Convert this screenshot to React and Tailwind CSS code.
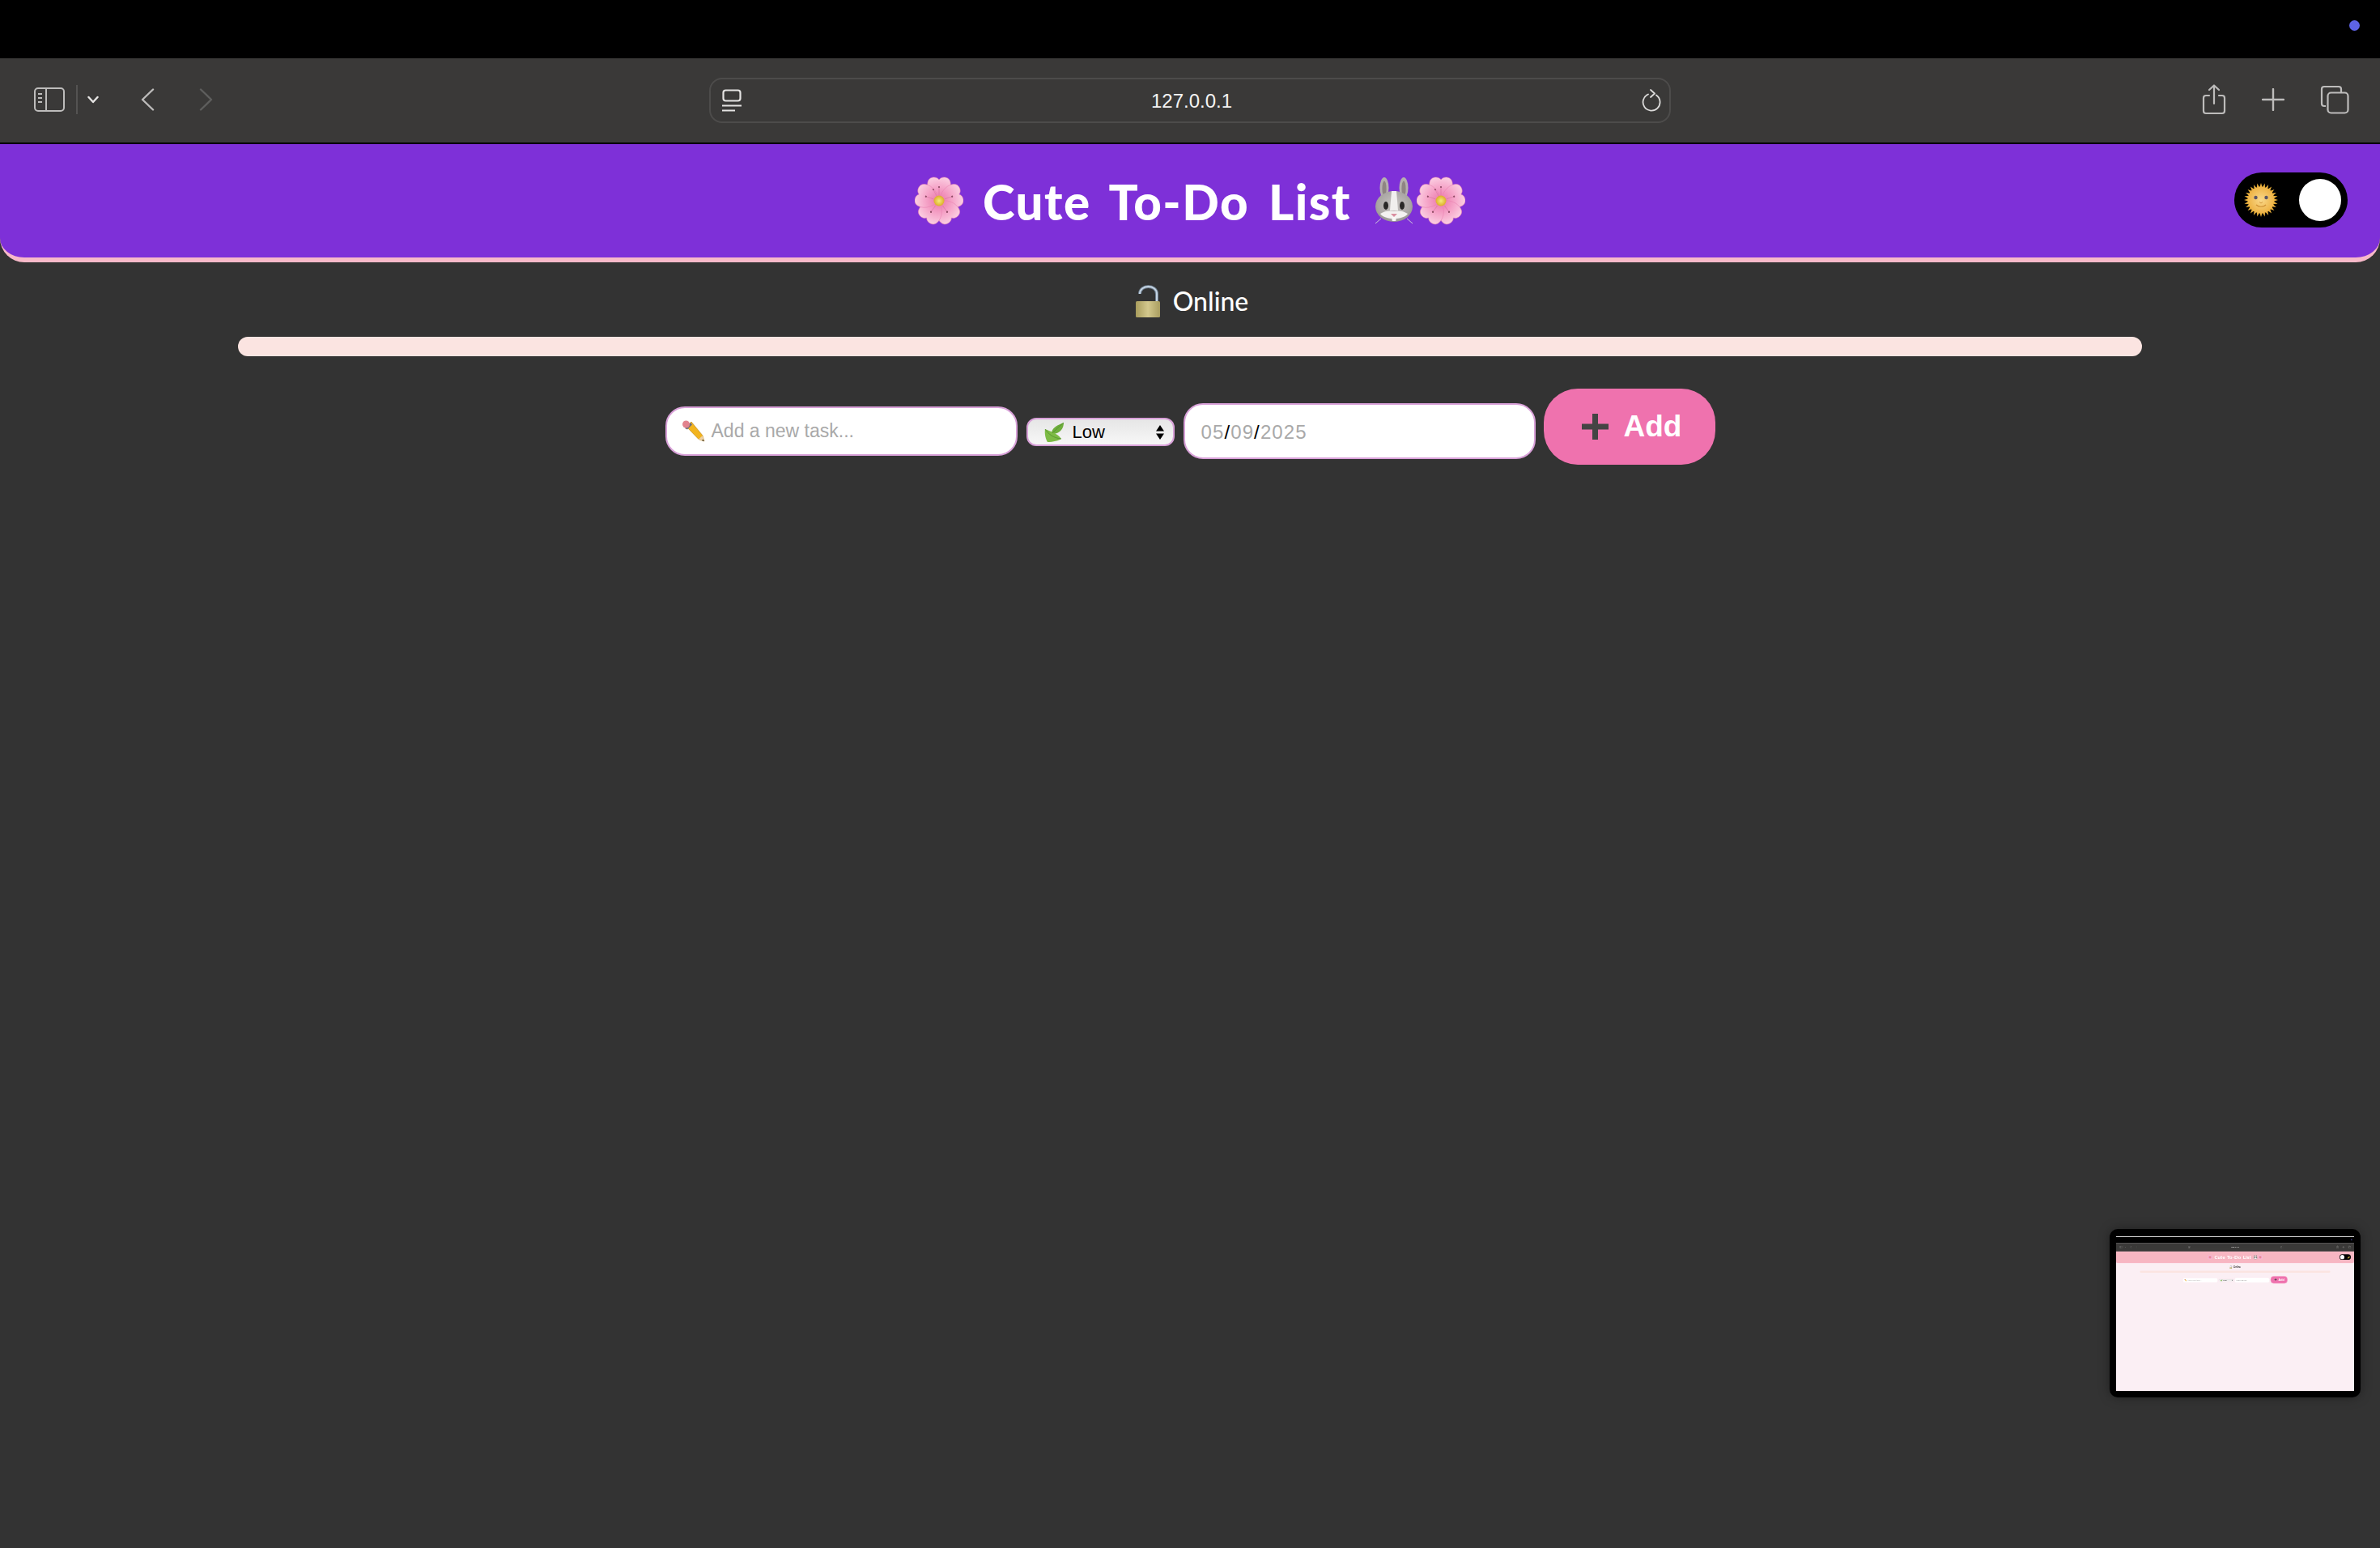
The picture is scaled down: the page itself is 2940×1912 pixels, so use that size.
import React from 'react';

const comic = "font-['Comic_Sans_MS','Lato',sans-serif]";
const arial = "font-['Liberation_Sans',Arial,sans-serif]";

const Flower = ({ className }) => (
  <svg viewBox="0 0 60 60" className={className}>
    <defs>
      <radialGradient id="petal" gradientUnits="userSpaceOnUse" cx="30" cy="30" r="30">
        <stop offset="0.2" stopColor="#ee86b4" />
        <stop offset="0.6" stopColor="#f6a9cb" />
        <stop offset="1" stopColor="#fbcfe2" />
      </radialGradient>
      <radialGradient id="pollen">
        <stop offset="0" stopColor="#f6ea7a" />
        <stop offset="1" stopColor="#dcae2a" />
      </radialGradient>
    </defs>
    {[0, 72, 144, 216, 288].map((a) => (
      <g key={a} transform={`rotate(${a} 30 30)`}>
        <path d="M30 30C22 26 14 17 16 7C17 0 27 -1 30 4C33 -1 43 0 44 7C46 17 38 26 30 30Z" fill="url(#petal)" stroke="#e77fae" strokeWidth="0.5" />
        <line x1="30" y1="23" x2="30" y2="13" stroke="#d8739f" strokeWidth="0.6" />
        <circle cx="30" cy="13" r="1.1" fill="#8d4a63" />
        <line x1="30" y1="30" x2="41" y2="19" stroke="#d8739f" strokeWidth="0.5" />
        <circle cx="41" cy="19" r="1" fill="#8d4a63" />
      </g>
    ))}
    <circle cx="30" cy="30" r="6.5" fill="url(#pollen)" />
  </svg>
);

const Bunny = () => (
  <svg viewBox="0 0 50 60" className="w-[50px] h-[60px]">
    <defs>
      <radialGradient id="fur" cx="0.5" cy="0.45" r="0.6">
        <stop offset="0" stopColor="#c9c5c3" />
        <stop offset="0.75" stopColor="#a9a5a3" />
        <stop offset="1" stopColor="#8f8b89" />
      </radialGradient>
    </defs>
    <ellipse cx="13" cy="14" rx="5.5" ry="13" fill="#b5b0ae" />
    <ellipse cx="37" cy="14" rx="5.5" ry="13" fill="#b5b0ae" />
    <ellipse cx="13" cy="15" rx="2.6" ry="9.5" fill="#8f8583" />
    <ellipse cx="37" cy="15" rx="2.6" ry="9.5" fill="#8f8583" />
    <ellipse cx="25" cy="37" rx="23" ry="19" fill="url(#fur)" />
    <path d="M22 18h6l2 24H20z" fill="#f1efee" />
    <path d="M8 46C14 42 20 42 25 43C30 42 36 42 42 46C36 54 14 54 8 46Z" fill="#f4f2f1" />
    <ellipse cx="15" cy="36" rx="3" ry="5" fill="#2a2827" />
    <ellipse cx="35" cy="36" rx="3" ry="5" fill="#2a2827" />
    <path d="M21 46h8l-4 4z" fill="#d98ea0" />
    <rect x="22.5" y="50" width="5" height="5" rx="1" fill="#f8f7f6" />
    <path d="M9 52L2 58M41 52L48 58" stroke="#cfc8d8" strokeWidth="1" />
  </svg>
);

const Lock = () => (
  <svg viewBox="0 0 30 40" className="w-[30px] h-[40px]">
    <defs>
      <linearGradient id="brass" x1="0" y1="0" x2="1" y2="0">
        <stop offset="0" stopColor="#a89c5c" />
        <stop offset="0.5" stopColor="#d3c88d" />
        <stop offset="1" stopColor="#a99d60" />
      </linearGradient>
    </defs>
    <path d="M5 11C5 -1 26 -1 26 11V21" fill="none" stroke="#6f7f90" strokeWidth="4" />
    <path d="M5 11C5 -1 26 -1 26 11V21" fill="none" stroke="#c3d3e2" strokeWidth="2" />
    <rect x="0" y="20" width="30" height="20" rx="1.5" fill="url(#brass)" />
  </svg>
);

const Pencil = () => (
  <svg viewBox="0 0 28 27" className="w-[28px] h-[27px] shrink-0">
    <path d="M5 8L11 2L25 19L27 26L20 23.5Z" fill="#f2b41f" stroke="#b97f12" strokeWidth="0.6" />
    <path d="M20 23.5L25 19L27 26Z" fill="#edd1a6" />
    <path d="M25.3 23.8L27 26L24 25Z" fill="#222" />
    <path d="M3 10L10 3L12 5.5L6 11.5Z" fill="#6f6f82" />
    <circle cx="4.5" cy="5" r="4.5" fill="#e2838e" />
  </svg>
);

const Leaves = () => (
  <svg viewBox="0 0 26 24" className="w-[26px] h-[24px] shrink-0">
    <path d="M10 12C12 5 18 3 25 0C25 7 21 13 12 14Z" fill="#6eae3c" />
    <path d="M2 8C1 14 3 21 5 24C12 24 19 22 22 20C17 13 9 11 2 8Z" fill="#7dbb45" />
    <path d="M2 8C6 14 12 19 22 20" stroke="#4d8a2a" strokeWidth="0.7" fill="none" />
    <path d="M11 13C15 9 19 5 25 0" stroke="#4d8a2a" strokeWidth="0.7" fill="none" />
  </svg>
);

const Sun = () => (
  <svg viewBox="0 0 42 42" className="w-[42px] h-[42px]">
    <defs>
      <radialGradient id="sunface">
        <stop offset="0" stopColor="#f9d88a" />
        <stop offset="1" stopColor="#eeb345" />
      </radialGradient>
    </defs>
    {Array.from({ length: 28 }, (_, i) => (
      <path key={i} d="M19.5 5L21 0L22.5 5Z" fill="#f0b53c" transform={`rotate(${(i * 360) / 28} 21 21)`} />
    ))}
    <circle cx="21" cy="21" r="16.5" fill="url(#sunface)" />
    <circle cx="14.5" cy="18" r="2.2" fill="#5a5566" />
    <circle cx="27.5" cy="18" r="2.2" fill="#5a5566" />
    <path d="M15 27C18 30 24 30 27 27" stroke="#cf9236" strokeWidth="1.2" fill="none" />
    <path d="M19 23.5L21 25L23 23.5" stroke="#d59b40" strokeWidth="1" fill="none" />
  </svg>
);

const Moon = () => (
  <svg viewBox="0 0 42 42" className="w-[42px] h-[42px]">
    <path d="M30 4A18 18 0 1 1 6 30A20 20 0 0 0 30 4Z" fill="#f2cc4d" />
  </svg>
);

const BrowserChrome = () => (
  <>
    <div className="h-[72px] bg-black flex justify-end items-start pt-[25px] pr-[25px]">
      <div className="w-[13px] h-[13px] rounded-full bg-[#5e63e6]" />
    </div>

    <div className="h-[106px] bg-[#3a3938] border-b-2 border-black grid grid-cols-[876px_1188px_1fr] items-center">
      <div className="flex items-center pl-[42px] pb-[2px]">
        <svg viewBox="0 0 38 30" className="w-[38px] h-[30px] text-[#bdbcbb]" fill="none" stroke="currentColor" strokeWidth="2">
          <rect x="1" y="1" width="36" height="28" rx="4" />
          <path d="M15 1V29M5 8H10M5 13H10M5 18H10" />
        </svg>
        <div className="w-[2px] h-[36px] bg-[#545352] ml-[14px]" />
        <svg viewBox="0 0 14 10" className="w-[14px] h-[10px] ml-[12px] text-[#e6e5e4]" fill="none" stroke="currentColor" strokeWidth="2.4" strokeLinecap="round" strokeLinejoin="round">
          <path d="M1.5 2L7 8L12.5 2" />
        </svg>
        <svg viewBox="0 0 17 28" className="w-[17px] h-[28px] ml-[52px] text-[#bdbcbb]" fill="none" stroke="currentColor" strokeWidth="2.4" strokeLinecap="round" strokeLinejoin="round">
          <path d="M15 1.5L2 14L15 26.5" />
        </svg>
        <svg viewBox="0 0 17 28" className="w-[17px] h-[28px] ml-[55px] text-[#5e5e5d]" fill="none" stroke="currentColor" strokeWidth="2.4" strokeLinecap="round" strokeLinejoin="round">
          <path d="M2 1.5L15 14L2 26.5" />
        </svg>
      </div>

      <div className="h-[56px] rounded-[16px] border-2 border-[#4d4c4b] flex items-center justify-between pl-[14px] pr-[10px]">
        <svg viewBox="0 0 24 28" className="w-[24px] h-[28px] text-[#e4e3e2]" fill="none" stroke="currentColor" strokeWidth="2.2">
          <rect x="1.5" y="1.5" width="21" height="13" rx="3" />
          <path d="M0 20.5H24M0 26.5H16" />
        </svg>
        <span className={`${arial} text-[24px] text-[#f4f4f4] font-medium mt-[1px]`}>127.0.0.1</span>
        <svg viewBox="0 0 24 28" className="w-[24px] h-[28px] text-[#dcdbda]" fill="none" stroke="currentColor" strokeWidth="1.8" strokeLinecap="round" strokeLinejoin="round">
          <path d="M8 6.5A10.5 10.5 0 1 0 18 7.5M11 1L16 5.5L11 10" />
        </svg>
      </div>

      <div className="flex items-center pl-[656px] pb-[2px] text-[#bdbcbb]">
        <svg viewBox="0 0 30 38" className="w-[30px] h-[38px]" fill="none" stroke="currentColor" strokeWidth="2.2" strokeLinecap="round" strokeLinejoin="round">
          <path d="M9 14H5A3 3 0 0 0 2 17V33A3 3 0 0 0 5 36H25A3 3 0 0 0 28 33V17A3 3 0 0 0 25 14H21M15 24V2M9 7L15 1.5L21 7" />
        </svg>
        <svg viewBox="0 0 28 28" className="w-[28px] h-[28px] ml-[44px]" fill="none" stroke="currentColor" strokeWidth="2.4" strokeLinecap="round">
          <path d="M14 1V27M1 14H27" />
        </svg>
        <svg viewBox="0 0 36 36" className="w-[36px] h-[36px] ml-[44px]" fill="none" stroke="currentColor" strokeWidth="2.2">
          <path d="M7 26H5A3 3 0 0 1 2 23V5A3 3 0 0 1 5 2H23A3 3 0 0 1 26 5V9" />
          <rect x="9.5" y="9.5" width="25" height="25" rx="4" />
        </svg>
      </div>
    </div>
  </>
);

const Screen = ({ dark }) => (
  <div className={dark ? 'h-[1912px] w-[2940px] bg-[#333333]' : 'h-[1912px] w-[2940px] bg-[#fbeff4]'}>
    <BrowserChrome />

    {/* HEADER */}
    <header className={`h-[146px] border-b-[6px] border-[#f8b9c9] rounded-b-[30px] flex items-center justify-center relative ${dark ? 'bg-[#7e30d8]' : 'bg-[#f7b6c2]'}`}>
      <h1 className={`${comic} flex items-center text-[60px] font-black text-white`}>
        <Flower className="w-[60px] h-[60px]" />
        <span className="ml-[24px] mr-[28px] mt-[2px] tracking-[1.5px] [word-spacing:8px]">Cute To-Do List</span>
        <Bunny />
        <Flower className="w-[60px] h-[60px] ml-[3px]" />
      </h1>
      {dark ? (
        <div className="absolute right-[40px] top-[35px] w-[140px] h-[68px] rounded-full bg-black flex items-center justify-between pl-[12px] pr-[8px]">
          <Sun />
          <div className="w-[52px] h-[52px] rounded-full bg-white" />
        </div>
      ) : (
        <div className="absolute right-[40px] top-[35px] w-[140px] h-[68px] rounded-full bg-black flex items-center justify-between pl-[8px] pr-[12px]">
          <div className="w-[52px] h-[52px] rounded-full bg-white" />
          <Moon />
        </div>
      )}
    </header>

    {/* STATUS */}
    <div className={`h-[92px] pt-[4px] pl-[5px] flex items-center justify-center gap-[16px] ${comic} text-[32px] font-medium ${dark ? 'text-white' : 'text-black'}`}>
      <Lock />
      <span>Online</span>
    </div>

    <div className="w-[2352px] h-[24px] mx-auto rounded-full bg-[#fbe4e1]" />

    {/* FORM */}
    <div className={`${arial} flex justify-center items-start h-[94px] mt-[40px]`}>
      <div className={`w-[435px] h-[61px] mt-[22px] rounded-[24px] bg-white border-2 flex items-center gap-[8px] pl-[19px] text-[23px] text-[#a9a9a9] ${dark ? 'border-[#d8a0d8]' : 'border-[#fbcfe0]'}`}>
        <Pencil />
        <span>Add a new task...</span>
      </div>

      <div className={`w-[183px] h-[35px] mt-[36px] ml-[11px] rounded-[12px] border-2 bg-gradient-to-b from-[#e6e6e6] to-[#f7f7f7] flex items-center pl-[19px] pr-[11px] text-[22px] text-black ${dark ? 'border-[#d8a0d8]' : 'border-[#fbcfe0]'}`}>
        <Leaves />
        <span className="ml-[10px] flex-1">Low</span>
        <svg viewBox="0 0 10 18" className="w-[10px] h-[18px]">
          <path d="M5 0L10 7.5H0ZM5 18L0 10.5H10Z" fill="#000" />
        </svg>
      </div>

      <div className={`w-[435px] h-[69px] mt-[18px] ml-[11px] rounded-[24px] bg-white border-2 flex items-center pl-[20px] pt-[2px] text-[24px] tracking-[1.1px] text-[#a9a9a9] ${dark ? 'border-[#d8a0d8]' : 'border-[#fbcfe0]'}`}>
        <span>05</span><span className="text-black">/</span><span>09</span><span className="text-black">/</span><span>2025</span>
      </div>

      <div className={`w-[212px] h-[94px] ml-[10px] pl-[6px] rounded-[42px] bg-[#ef72ae] flex items-center justify-center gap-[19px] text-[37px] font-bold text-white ${dark ? '' : 'border-[4px] border-[#fbcfe0]'}`}>
        <svg viewBox="0 0 33 32" className="w-[33px] h-[32px]">
          <path d="M13 0H20V12.5H33V19.5H20V32H13V19.5H0V12.5H13Z" fill="#444444" />
        </svg>
        <span>Add</span>
      </div>
    </div>
  </div>
);

const App = () => {
  return (
    <div className="relative h-screen overflow-hidden bg-[#333333]">
      <Screen dark />

      {/* WINDOW THUMBNAIL */}
      <div className="absolute left-[2606px] top-[1518px] w-[310px] h-[208px] rounded-[10px] bg-black shadow-[0_0_14px_rgba(0,0,0,0.35)] pl-[8px] pt-[9px]">
        <div className="w-[294px] h-[191px] overflow-hidden border-t border-[#dddddd] blur-[0.5px]">
          <div className="origin-top-left scale-[0.1]">
            <Screen />
          </div>
        </div>
      </div>
    </div>
  );
};

export default App;
